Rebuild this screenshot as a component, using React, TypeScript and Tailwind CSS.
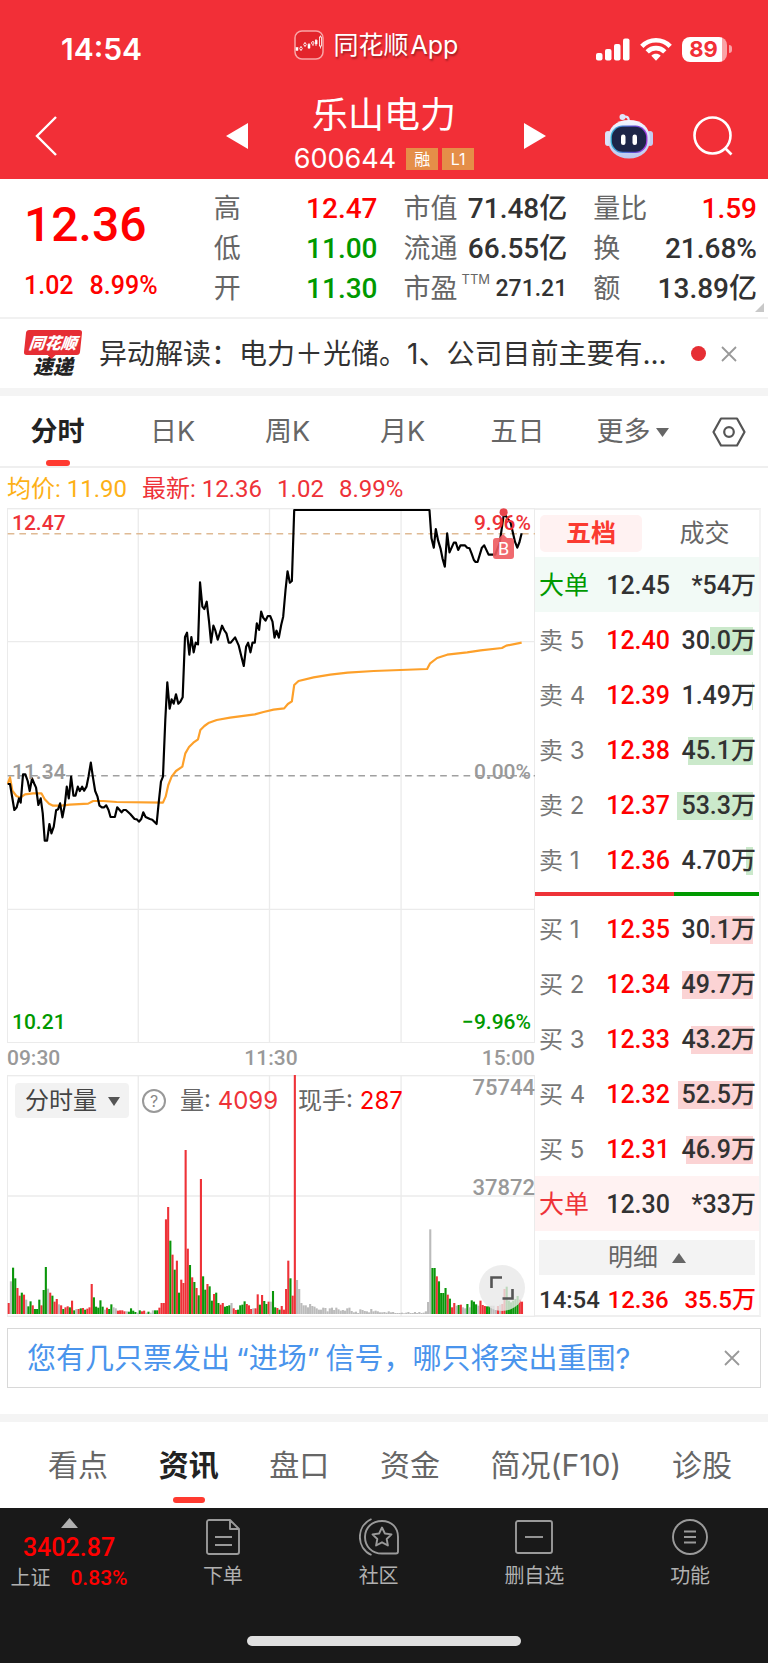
import React from "react";

const SANS = "font-[Inter,'Noto_Sans_CJK_SC',sans-serif]";
const NUM = "font-[Roboto,'Noto_Sans_CJK_SC',sans-serif]";

/* ---------- data ---------- */

type Stat = { label: string; value: string; tone: string; note?: string };

const STATS: Stat[][] = [
  [
    { label: "高", value: "12.47", tone: "text-[#ff0000]" },
    { label: "低", value: "11.00", tone: "text-[#009900]" },
    { label: "开", value: "11.30", tone: "text-[#009900]" },
  ],
  [
    { label: "市值", value: "71.48亿", tone: "text-[#323232]" },
    { label: "流通", value: "66.55亿", tone: "text-[#323232]" },
    { label: "市盈", value: "271.21", tone: "text-[#323232]", note: "TTM" },
  ],
  [
    { label: "量比", value: "1.59", tone: "text-[#ff0000]" },
    { label: "换", value: "21.68%", tone: "text-[#323232]" },
    { label: "额", value: "13.89亿", tone: "text-[#323232]" },
  ],
];

const PERIODS = ["分时", "日K", "周K", "月K", "五日"];
const SECTIONS = ["看点", "资讯", "盘口", "资金", "简况(F10)", "诊股"];

type Quote = { label: string; price: string; volume: string; depth: number };

const ASKS: Quote[] = [
  { label: "卖 5", price: "12.40", volume: "30.0万", depth: 43 },
  { label: "卖 4", price: "12.39", volume: "1.49万", depth: 1 },
  { label: "卖 3", price: "12.38", volume: "45.1万", depth: 65 },
  { label: "卖 2", price: "12.37", volume: "53.3万", depth: 76 },
  { label: "卖 1", price: "12.36", volume: "4.70万", depth: 7 },
];

const BIDS: Quote[] = [
  { label: "买 1", price: "12.35", volume: "30.1万", depth: 43 },
  { label: "买 2", price: "12.34", volume: "49.7万", depth: 71 },
  { label: "买 3", price: "12.33", volume: "43.2万", depth: 62 },
  { label: "买 4", price: "12.32", volume: "52.5万", depth: 75 },
  { label: "买 5", price: "12.31", volume: "46.9万", depth: 67 },
];

const PRICE_LINE =
  "24,852 31,852 44,930 51,922 58,895 63,908 70,823 77,823 84,843 90,873 97,835 104,852 109,863 116,915 123,895 129,940 135,1022 142,1022 149,972 155,1000 162,980 169,931 175,928 181,910 188,952 195,915 201,860 207,895 214,830 221,887 227,887 234,860 240,873 247,860 253,872 260,860 266,830 273,788 279,830 286,873 293,890 299,917 306,922 313,922 319,916 326,930 332,951 345,951 352,922 365,937 371,930 378,930 391,942 404,957 411,958 417,965 424,957 430,937 437,951 450,957 457,959 470,972 476,910 483,845 489,830 496,660 502,547 509,626 515,598 521,611 528,583 535,611 541,605 548,592 555,411 561,398 568,464 574,411 581,457 587,428 594,433 600,247 607,320 613,327 620,305 627,365 633,428 640,377 646,392 653,419 659,400 666,377 672,390 679,400 686,428 692,428 705,412 716,437 724,470 731,498 738,440 744,428 751,457 757,428 764,428 770,370 777,390 783,335 789,353 796,362 803,348 810,348 817,365 823,413 829,392 836,413 843,375 849,350 856,270 862,214 869,248 875,243 882,30 1287,30 1293,115 1300,143 1306,87 1313,122 1320,145 1326,175 1333,200 1340,100 1347,157 1360,128 1366,128 1373,150 1380,136 1393,136 1400,143 1407,145 1413,160 1420,180 1425,186 1431,186 1444,143 1451,136 1464,164 1484,164 1491,145 1497,130 1510,40 1517,50 1530,68 1543,125 1550,143 1556,128 1563,100";

const AVERAGE_LINE =
  "24,852 31,832 38,872 50,888 62,893 76,883 100,880 125,880 135,898 148,911 160,917 185,917 210,914 265,911 280,903 310,903 350,906 489,908 497,890 505,855 515,830 528,813 547,800 556,760 567,741 580,728 594,718 601,690 613,678 627,668 650,660 690,653 764,643 790,636 820,629 852,625 863,612 875,604 882,555 895,543 940,532 990,524 1042,518 1120,513 1200,510 1280,507 1289,490 1310,474 1340,464 1400,457 1440,451 1504,444 1517,437 1563,428";

/* One entry per minute: r = up, g = down, n = flat, followed by the bar height. */
const VOLUME =
  "r33 n98 g139 g107 r78 r55 g64 r58 n43 g23 g38 r26 g15 g15 g43 r26 g72 g141 n76 r64 g55 r37 r45 n29 r26 g15 r20 r23 g20 r40 g11 n15 r15 g17 r18 g13 r16 r20 r90 g50 g22 g19 g41 g22 n13 r19 g15 g29 n20 n17 r10 r11 r11 r8 n8 g7 g17 g10 g6 n4 g11 r8 r10 n4 g7 n4 n11 g11 g11 r19 r33 r33 r284 r321 g220 r178 g133 r160 g64 r103 r93 r492 r196 g147 r110 g96 r78 g56 r405 g113 g73 r90 g83 g40 r60 g64 g33 r28 r33 g22 g24 g26 n33 r17 r12 g13 g26 g28 g38 r30 r26 r15 n17 r17 r59 g28 r57 g39 g30 r37 n37 g69 g20 r18 g13 r24 r13 r75 r160 g107 r55 r717 n102 n75 n33 n26 n26 n20 n30 n24 n22 n17 n13 n13 n19 n18 n8 n17 n19 n12 n19 n14 n10 n12 n10 n17 n19 n9 n5 n7 n3 n14 n12 n9 n8 n5 n15 n8 n10 n8 n5 n5 n6 n4 n8 n5 n6 n3 n3 n3 n4 n2 n4 n6 n3 n3 n6 n3 n6 n3 n4 n8 n36 n254 g138 g138 r113 g98 g63 g63 g78 r58 g46 r20 r33 n25 g27 r28 n20 n17 g30 n20 g41 g37 g29 n25 r40 r27 r24 g23 g24 n25 n25 n12 r24 n28 r30 r75 g82 g40 g35 g40 g45 g54 r43 r37";

const BAR_FILL: Record<string, string> = { r: "#ee3238", g: "#0a960a", n: "#bbbbbb" };

/* ---------- icons ---------- */

function AppMark() {
  return (
    <svg viewBox="0 0 30 30" className="h-[30px] w-[30px]" aria-hidden="true">
      <rect x="1" y="1" width="28" height="28" rx="7" fill="#e3242b" stroke="#f9a5a7" strokeWidth="1.5" />
      <g fill="#fff" stroke="#fff">
        <rect x="2" y="17.500" width="2" height="3" strokeWidth=".5" />
        <path d="M7 16v5M11 12v5M19 11v5M22 9v7M15 13v6" strokeWidth=".8" />
        <circle cx="7" cy="18.500" r="1.300" fill="#e3242b" strokeWidth=".8" />
        <circle cx="11" cy="14.500" r="1.300" fill="#e3242b" strokeWidth=".8" />
        <rect x="14" y="14.500" width="2" height="3.500" strokeWidth=".5" />
        <circle cx="18.800" cy="13" r="1.300" fill="#e3242b" strokeWidth=".8" />
        <rect x="21.300" y="10.500" width="1.800" height="3.500" strokeWidth=".5" />
        <path d="M26.500 5.500v13" strokeWidth=".8" />
        <rect x="25.500" y="7" width="2" height="9" fill="#e3242b" strokeWidth=".8" />
      </g>
    </svg>
  );
}

function SignalIcon() {
  return (
    <svg viewBox="0 0 34 24" className="h-6 w-[34px]" fill="#fff" aria-hidden="true">
      <rect x="0" y="16" width="6.500" height="7.500" rx="2" />
      <rect x="9" y="12" width="6.500" height="11.500" rx="2" />
      <rect x="18" y="7" width="6.500" height="16.500" rx="2" />
      <rect x="27" y="1.500" width="6.500" height="22" rx="2" />
    </svg>
  );
}

function WifiIcon() {
  return (
    <svg viewBox="0 0 32 24" className="h-6 w-8" aria-hidden="true">
      <g fill="none" stroke="#fff" strokeWidth="4.600">
        <path d="M1.800 9.300C9.700 1.200 22.300 1.200 30.200 9.300" />
        <path d="M7.200 14.900c4.900-5 12.700-5 17.600 0" />
      </g>
      <path d="M11.300 18.800c2.700-2.600 6.700-2.600 9.400 0L16 23.700Z" fill="#fff" />
    </svg>
  );
}

function RobotIcon() {
  return (
    <svg viewBox="0 0 48 46" className="h-[46px] w-12" aria-hidden="true">
      <defs>
        <linearGradient id="shell" x1="0" y1="0" x2="0" y2="1">
          <stop offset="0" stopColor="#f4f7ff" />
          <stop offset="1" stopColor="#bcc8ee" />
        </linearGradient>
        <linearGradient id="rim" x1="0" y1="0" x2="1" y2="0">
          <stop offset="0" stopColor="#39b7d6" />
          <stop offset=".6" stopColor="#5a4fd0" />
          <stop offset="1" stopColor="#a63ce0" />
        </linearGradient>
      </defs>
      <path d="M18 4c4-1 6 0 6 5" fill="none" stroke="#dfe6fb" strokeWidth="2.400" />
      <circle cx="17.500" cy="4" r="3" fill="#dfe6fb" />
      <rect x="0" y="18" width="6" height="15" rx="3" fill="#dbe2f8" />
      <rect x="42" y="18" width="6" height="15" rx="3" fill="#c4cdf0" />
      <path d="M24 7c13 0 21 7.500 21 19S37 45.500 24 45.500 3 37.500 3 26 11 7 24 7Z" fill="url(#shell)" />
      <rect x="5.500" y="12.500" width="37" height="27.500" rx="12" fill="url(#rim)" />
      <rect x="6.800" y="13.800" width="34.400" height="25" rx="11" fill="#1d2547" />
      <rect x="16" y="21.500" width="4.500" height="10.500" rx="2.200" fill="#fff" />
      <rect x="27.500" y="21.500" width="4.500" height="10.500" rx="2.200" fill="#fff" />
    </svg>
  );
}

function ExpressLogo() {
  return (
    <div className="flex w-[58px] shrink-0 flex-col items-center">
      <div className="relative flex h-[25px] w-[56px] -skew-x-6 items-center justify-center rounded-[3px] bg-[#e62e34] text-[16px] leading-none font-black text-white italic">
        同花顺
        <span className="absolute top-[25px] left-[24px] border-x-4 border-t-4 border-x-transparent border-t-[#e62e34]" />
      </div>
      <div className="mt-[2px] text-[20px] leading-[20px] font-black text-[#222] italic">速递</div>
    </div>
  );
}

function CloseIcon() {
  return (
    <svg viewBox="0 0 18 18" className="h-[18px] w-[18px]" aria-hidden="true">
      <path d="M2 2l14 14M16 2L2 16" stroke="#999" strokeWidth="1.800" fill="none" />
    </svg>
  );
}

/* ---------- sections ---------- */

function Header() {
  return (
    <header className="bg-[#f22f37] text-white">
      <div className="grid h-[92px] grid-cols-[1fr_auto_1fr] items-center pr-[18px]">
        <div className="pt-[6px] pl-[61px] text-[30px] leading-9 font-semibold">14:54</div>
        <div className="flex items-center gap-[10px] pb-[2px] pl-[2px] text-[25px] leading-8">
          <AppMark />
          <span className="flex gap-[2px] [text-shadow:1px_2px_2px_rgba(0,0,0,0.35)]">
            同花顺<span>App</span>
          </span>
        </div>
        <div className="flex items-center justify-end gap-[10px] pt-[6px] pr-[18px]">
          <SignalIcon />
          <WifiIcon />
          <div className="flex items-center gap-[2px]">
            <div className="flex h-[25px] w-[45px] items-center justify-center rounded-[8px] bg-[linear-gradient(90deg,#fff_90%,#f9a3a6_90%)] pr-[2px] text-[22px] leading-none font-bold text-[#f22f37]">
              89
            </div>
            <span className="h-[8px] w-[3px] rounded-r-full bg-[#f9a3a6]" />
          </div>
        </div>
      </div>
      <div className="grid h-[87px] grid-cols-[1fr_324px_1fr] items-center">
        <button aria-label="返回" className="w-fit pl-[34px]">
          <svg viewBox="0 0 24 40" className="h-10 w-6" aria-hidden="true">
            <path d="M22 1L3 20l19 19" fill="none" stroke="#fff" strokeWidth="2.400" />
          </svg>
        </button>
        <div className="flex items-center justify-between pl-1">
          <button aria-label="上一只">
            <svg viewBox="0 0 22 26" className="h-[26px] w-[22px]" fill="#fff" aria-hidden="true">
              <path d="M22 0v26L0 13Z" />
            </svg>
          </button>
          <div className="flex flex-col items-center gap-[10px] pr-1 pb-1">
            <h1 className="text-[36px] leading-10 font-normal">乐山电力</h1>
            <div className="flex items-center gap-1 text-[16px] leading-[22px]">
              <span className="pr-[6px] text-[27px] leading-7">600644</span>
              <span className="w-8 bg-[#e58e48] text-center">融</span>
              <span className="w-8 bg-[#e58e48] text-center">L1</span>
            </div>
          </div>
          <button aria-label="下一只">
            <svg viewBox="0 0 22 26" className="h-[26px] w-[22px]" fill="#fff" aria-hidden="true">
              <path d="M0 0v26L22 13Z" />
            </svg>
          </button>
        </div>
        <div className="flex items-center justify-end gap-10 pr-[35px]">
          <button aria-label="智能助手">
            <RobotIcon />
          </button>
          <button aria-label="搜索">
            <svg viewBox="0 0 40 40" className="h-10 w-10" fill="none" stroke="#fff" strokeWidth="2.600" aria-hidden="true">
              <circle cx="19.500" cy="19.500" r="18" />
              <path d="M32 32l6.500 6.500" />
            </svg>
          </button>
        </div>
      </div>
    </header>
  );
}

function Summary() {
  return (
    <section className="relative grid h-[138px] grid-cols-4 gap-[26px] pr-[11px] pl-[24px]">
      <div className={`${NUM} pt-[16px] font-medium whitespace-nowrap text-[#ff0000]`}>
        <div className="text-[48px] leading-[60px]">12.36</div>
        <div className="flex gap-4 pt-[18px] text-[25px] leading-[26px]">
          <span>1.02</span>
          <span>8.99%</span>
        </div>
      </div>
      {STATS.map((column, i) => (
        <dl key={i} className="pt-[10px]">
          {column.map((s) => (
            <div key={s.label} className="flex h-10 items-center justify-between leading-10 whitespace-nowrap">
              <dt className="flex text-[27px] text-[#666]">
                {s.label}
                {s.note && <sup className="top-0 pl-1 text-[13px] leading-5">{s.note}</sup>}
              </dt>
              <dd className={`${NUM} ${s.tone} ${s.note ? "text-[23px]" : "text-[28px]"} font-medium`}>{s.value}</dd>
            </div>
          ))}
        </dl>
      ))}
      <svg viewBox="0 0 9 9" className="absolute right-[4px] bottom-[5px] h-[9px] w-[9px]" aria-hidden="true">
        <path d="M9 0v9H0Z" fill="#c8c8c8" />
      </svg>
    </section>
  );
}

function News() {
  return (
    <section className="flex h-[71px] items-center border-t-2 border-[#f1f1f1] pr-[30px] pl-[24px]">
      <ExpressLogo />
      <p className="min-w-0 flex-1 pl-[17px] text-[28px] leading-10 whitespace-nowrap text-[#323232]">
        异动解读：电力＋光储。1、公司目前主要有...
      </p>
      <span className="mr-[14px] h-[15px] w-[15px] rounded-full bg-[#e62e34]" />
      <button aria-label="关闭快讯">
        <CloseIcon />
      </button>
    </section>
  );
}

function PeriodTabs() {
  return (
    <nav className="flex h-[72px] border-b-2 border-[#efefef] pr-[18px] text-[27px] text-[#666]">
      <div className="grid flex-1 grid-cols-6">
        {PERIODS.map((p, i) => (
          <button key={p} className={i === 0 ? "relative pt-[3px] font-bold text-[#222]" : "pt-[3px]"}>
            {p}
            {i === 0 && <span className="absolute bottom-0 left-1/2 h-[6px] w-6 -translate-x-1/2 rounded-[3px] bg-[#ff3a30]" />}
          </button>
        ))}
        <button className="flex items-center justify-center gap-[5px] pt-[3px]">
          更多
          <svg viewBox="0 0 13 9" className="h-[9px] w-[13px]" fill="#666" aria-hidden="true">
            <path d="M0 0h13L6.500 9Z" />
          </svg>
        </button>
      </div>
      <button aria-label="图表设置" className="flex w-[60px] items-center justify-end pt-[2px] pr-[4px]">
        <svg viewBox="0 0 34 30" className="h-[30px] w-[34px]" fill="none" stroke="#555" strokeWidth="2.200" strokeLinejoin="round" aria-hidden="true">
          <path d="M9 1.500h16L32.500 15 25 28.500H9L1.500 15Z" />
          <circle cx="17" cy="15" r="4.800" />
        </svg>
      </button>
    </nav>
  );
}

function PriceChart() {
  return (
    <div className={`${NUM} relative h-[535px] text-[21px] leading-6 font-medium`}>
      <svg viewBox="22 24 1581 1605" preserveAspectRatio="none" className="h-full w-full" role="img" aria-label="分时走势">
        <g stroke="#ebebeb" strokeWidth="4" fill="none">
          <path d="M415 24V1629M808 24V1629M1202 24V1629M22 425H1603M22 1228H1603" />
          <rect x="23" y="26" width="1579" height="1602" />
        </g>
        <path d="M24 101H1603" stroke="#dfba94" strokeWidth="4.500" strokeDasharray="20 15" />
        <path d="M24 827H1603" stroke="#a0a0a0" strokeWidth="4.500" strokeDasharray="20 15" />
        <polyline points={AVERAGE_LINE} fill="none" stroke="#fda02a" strokeWidth="6.500" strokeLinejoin="round" />
        <polyline points={PRICE_LINE} fill="none" stroke="#000" strokeWidth="6.500" strokeLinejoin="round" />
        <circle cx="1509" cy="37" r="12" fill="#e8454b" />
      </svg>
      <span className="absolute top-[3px] left-[5px] text-[#ee3238]">12.47</span>
      <span className="absolute top-[3px] right-[4px] text-[#ee3238]">9.96%</span>
      <span className="absolute top-[252px] left-[5px] text-[#999]">11.34</span>
      <span className="absolute top-[252px] right-[4px] text-[#999]">0.00%</span>
      <span className="absolute bottom-[9px] left-[5px] text-[#009900]">10.21</span>
      <span className="absolute right-[4px] bottom-[9px] text-[#009900]">−9.96%</span>
      <span className="absolute top-[30px] right-[21px] flex h-[21px] w-[21px] items-center justify-center rounded-[3px] bg-[#ee5a5f]/90 text-[18px] leading-none font-normal text-white">
        B
        <span className="absolute -top-[4px] left-[6px] border-x-4 border-b-4 border-x-transparent border-b-[#ee5a5f]/90" />
      </span>
    </div>
  );
}

function VolumeChart() {
  return (
    <div className="relative h-[242px]">
      <svg viewBox="22 106 1581 726" preserveAspectRatio="none" className="h-full w-full" role="img" aria-label="分时成交量">
        <g stroke="#ebebeb" strokeWidth="4" fill="none">
          <path d="M415 106V832M808 106V832M1202 106V832M22 469H1603" />
          <rect x="23" y="108" width="1579" height="722" />
        </g>
        {VOLUME.split(" ").map((bar, i) => {
          const h = Number(bar.slice(1));
          return <rect key={i} x={24 + i * 6.54} y={823 - h} width="6.300" height={h} fill={BAR_FILL[bar[0]]} />;
        })}
      </svg>
      <div className="absolute top-[8px] left-[8px] flex h-[35px] items-center text-[24px] text-[#666]">
        <div className="relative">
          <select aria-label="副图指标" className="h-[35px] w-[114px] appearance-none rounded-[4px] bg-[#f2f2f2] pl-[10px] text-[24px] leading-[35px] text-[#444]">
            <option>分时量</option>
          </select>
          <svg viewBox="0 0 12 9" className="pointer-events-none absolute top-[14px] right-[9px] h-[9px] w-3" fill="#555" aria-hidden="true">
            <path d="M0 0h12L6 9Z" />
          </svg>
        </div>
        <button aria-label="说明" className="ml-[13px] flex h-6 w-6 items-center justify-center rounded-full border-2 border-[#999] text-[16px] leading-none text-[#888]">
          ?
        </button>
        <span className="ml-[14px] whitespace-pre">
          量: <b className="font-normal text-[#ee3238]">4099</b>
        </span>
        <span className="ml-[20px] whitespace-pre">
          现手: <b className="font-normal text-[#ff0000]">287</b>
        </span>
      </div>
      <span className={`${NUM} absolute top-px right-0 text-[22px] leading-6 font-medium text-[#999]`}>75744</span>
      <span className={`${NUM} absolute top-[101px] right-0 text-[22px] leading-6 font-medium text-[#999]`}>37872</span>
      <button aria-label="全屏" className="absolute right-[10px] bottom-[6px] flex h-[46px] w-[46px] items-center justify-center rounded-full bg-[#e8e8e8]/80">
        <svg viewBox="0 0 24 24" className="h-6 w-6" fill="none" stroke="#555" strokeWidth="2.600" aria-hidden="true">
          <path d="M1.500 12V1.500H12M22.500 13v9.500H12.500" />
        </svg>
      </button>
    </div>
  );
}

function QuoteRow({ quote, fill }: { quote: Quote; fill: string }) {
  return (
    <tr className="h-[55px]">
      <th scope="row" className={`${SANS} pt-[2px] pl-[4px] text-left text-[24px] font-normal text-[#777]`}>
        {quote.label}
      </th>
      <td className="pt-[2px] text-right text-[#ff0000]">{quote.price}</td>
      <td className="relative pt-[2px] pr-[3px] text-right text-[#323232]">
        <span className={`${fill} absolute top-[15px] right-[6px] h-7`} style={{ width: quote.depth }} />
        <span className="relative">{quote.volume}</span>
      </td>
    </tr>
  );
}

function OrderBook() {
  return (
    <aside className={`${NUM} flex w-[226px] shrink-0 flex-col border-2 border-l-0 border-[#efefef] border-r-[#f3f3f3]`}>
      <div className={`${SANS} flex h-[47px] items-center pl-[5px] text-[25px]`}>
        <button className="h-[37px] w-[102px] rounded-[5px] bg-[#fff2f2] font-bold text-[#fb3a30]">五档</button>
        <button className="flex-1 pl-[8px] text-[#666]">成交</button>
      </div>
      <table className="w-full table-fixed border-collapse text-[25px] leading-8 font-medium">
        <colgroup>
          <col className="w-[69px]" />
          <col className="w-[66px]" />
          <col />
        </colgroup>
        <tbody>
          <tr className="h-[55px] bg-[#f2faf6] text-[#323232]">
            <th scope="row" className="pt-[2px] pl-[4px] text-left font-normal text-[#009900]">大单</th>
            <td className="pt-[2px] text-right">12.45</td>
            <td className="pt-[2px] pr-[3px] text-right">*54万</td>
          </tr>
          {ASKS.map((q) => (
            <QuoteRow key={q.label} quote={q} fill="bg-[#cbe9cb]" />
          ))}
          <tr className="h-[14px]">
            <td colSpan={3}>
              <div className="flex h-1">
                <span className="w-[62%] bg-[#ee3238]" />
                <span className="flex-1 bg-[#009900]" />
              </div>
            </td>
          </tr>
          {BIDS.map((q) => (
            <QuoteRow key={q.label} quote={q} fill="bg-[#fbd3d4]" />
          ))}
          <tr className="h-[55px] bg-[#fff2f2] text-[#323232]">
            <th scope="row" className="pt-[2px] pl-[4px] text-left font-normal text-[#ee3238]">大单</th>
            <td className="pt-[2px] text-right">12.30</td>
            <td className="pt-[2px] pr-[3px] text-right">*33万</td>
          </tr>
        </tbody>
      </table>
      <button className="mx-[4px] mt-[9px] flex h-[35px] items-center justify-center gap-[14px] bg-[#f3f3f3] text-[25px] text-[#666]">
        明细
        <svg viewBox="0 0 14 10" className="h-[10px] w-[14px]" fill="#666" aria-hidden="true">
          <path d="M0 10h14L7 0Z" />
        </svg>
      </button>
      <div className="flex flex-1 items-center justify-between pt-[9px] pr-[3px] pl-[4px] text-[24px] leading-none font-medium whitespace-nowrap text-[#ff0000]">
        <span className="text-[#323232]">14:54</span>
        <span>12.36</span>
        <span className="pl-2">35.5万</span>
      </div>
    </aside>
  );
}

function DocIcon() {
  return (
    <path d="M3 1h21l9 9v23a2 2 0 0 1-2 2H3a2 2 0 0 1-2-2V3a2 2 0 0 1 2-2ZM24 1v9h9M9 18h17M9 26h17" />
  );
}

const ACTIONS = [
  { label: "下单", box: "0 0 34 36", size: "h-9 w-[34px]", art: <DocIcon /> },
  {
    label: "社区",
    box: "0 0 40 38",
    size: "h-[38px] w-10",
    art: (
      <>
        <path d="M23 3c9.500 0 16 6.500 16 16v14.500a2 2 0 0 1-2 2H23C13 35.500 6 28.500 6 19S13 3 23 3Z" />
        <path d="M12.500 1C-3 8-3 30 12.500 37" />
        <path d="M23 9.500l2.900 6 6.600.9-4.800 4.600 1.200 6.500-5.900-3.200-5.900 3.200 1.200-6.500-4.800-4.600 6.600-.9Z" />
      </>
    ),
  },
  {
    label: "删自选",
    box: "0 0 38 34",
    size: "h-[34px] w-[38px]",
    art: (
      <>
        <rect x="1" y="1" width="36" height="32" rx="2" />
        <path d="M10 17h18" />
      </>
    ),
  },
  {
    label: "功能",
    box: "0 0 36 36",
    size: "h-9 w-9",
    art: (
      <>
        <circle cx="18" cy="18" r="17" />
        <path d="M12 12.500h12M12 18h12M12 23.500h12" />
      </>
    ),
  },
];

function Footer() {
  return (
    <footer className="flex-1 bg-[#191919] text-[#b0b0b0]">
      <div className="flex h-[92px]">
        <button className={`${NUM} flex w-[145px] flex-col items-center pt-[10px] pr-[7px]`}>
          <svg viewBox="0 0 17 10" className="h-[10px] w-[17px]" fill="#b0b0b0" aria-hidden="true">
            <path d="M0 10h17L8.500 0Z" />
          </svg>
          <span className="mt-[6px] text-[25px] leading-7 font-medium text-[#ff0000]">3402.87</span>
          <span className="mt-[2px] flex gap-5 text-[20px] leading-7">
            <span>上证</span>
            <span className="text-[21px] font-medium text-[#ff0000]">0.83%</span>
          </span>
        </button>
        {ACTIONS.map((a) => (
          <button key={a.label} className="flex flex-1 flex-col items-center">
            <span className="flex h-[58px] items-center">
              <svg viewBox={a.box} className={a.size} fill="none" stroke="#9a9a9a" strokeWidth="1.900" strokeLinejoin="round" aria-hidden="true">
                {a.art}
              </svg>
            </span>
            <span className="text-[20px] leading-5">{a.label}</span>
          </button>
        ))}
      </div>
      <div className="flex justify-center pt-9 pb-[17px]">
        <span className="h-[10px] w-[274px] rounded-full bg-[#e0e0e0]" />
      </div>
    </footer>
  );
}

export default function App() {
  return (
    <div className={`${SANS} flex min-h-screen flex-col bg-white`}>
      <Header />
      <Summary />
      <News />
      <div className="h-2 bg-[#f4f4f4]" />
      <PeriodTabs />
      <div className={`${NUM} flex h-10 items-center gap-[15px] pt-px pl-[7px] text-[24px] whitespace-pre text-[#ee3238]`}>
        <span className="text-[#fdb016]">均价: 11.90</span>
        <span>最新: 12.36</span>
        <span>1.02</span>
        <span>8.99%</span>
      </div>
      <main className="flex pr-[7px] pl-[7px]">
        <div className="min-w-0 flex-1">
          <PriceChart />
          <div className={`${NUM} flex h-8 items-center justify-between text-[21px] font-medium text-[#999]`}>
            <span>09:30</span>
            <span>11:30</span>
            <span>15:00</span>
          </div>
          <VolumeChart />
        </div>
        <OrderBook />
      </main>
      <div className="mx-[7px] mt-[11px] mb-[26px] flex h-[60px] items-center justify-between border border-[#d8d8d8] pr-[19px] pl-[19px]">
        <a href="#signal" className="flex gap-[6px] pt-[2px] text-[29px] leading-10 whitespace-nowrap text-[#4a94ec]">
          您有几只票发出<span>“进场”</span>信号，哪只将突出重围?
        </a>
        <button aria-label="关闭提示">
          <CloseIcon />
        </button>
      </div>
      <div className="h-2 bg-[#f4f4f4]" />
      <nav className="flex h-[86px] justify-between pr-[36px] pl-[48px] text-[30px] whitespace-nowrap text-[#666]">
        {SECTIONS.map((s, i) => (
          <button key={s} className={i === 1 ? "relative font-bold text-[#222]" : ""}>
            {s}
            {i === 1 && <span className="absolute bottom-[5px] left-1/2 h-[6px] w-8 -translate-x-1/2 rounded-[3px] bg-[#ff3a30]" />}
          </button>
        ))}
      </nav>
      <Footer />
    </div>
  );
}
